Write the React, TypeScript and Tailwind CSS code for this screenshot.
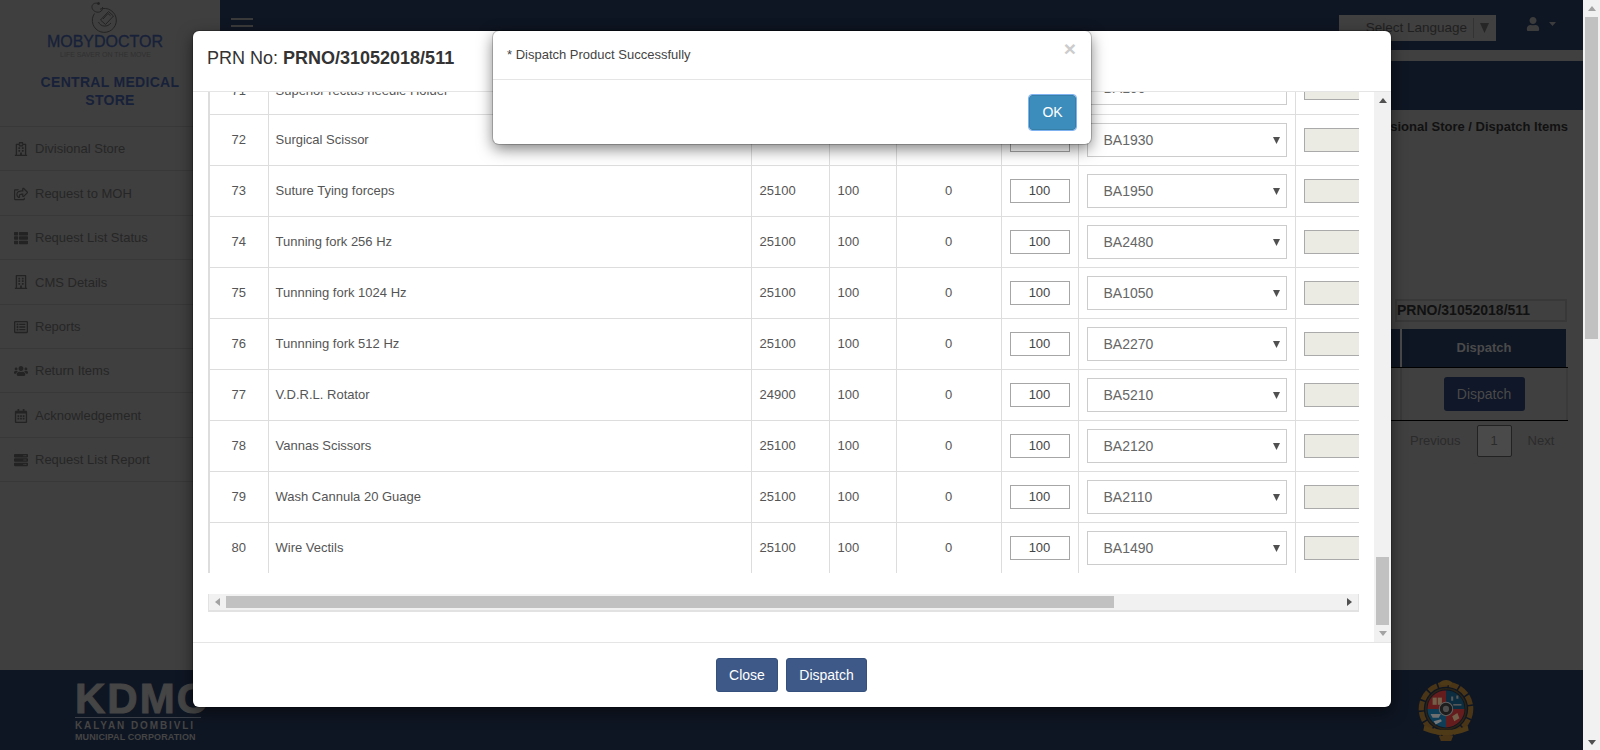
import { FaRegHospital, FaRegShareSquare, FaThList, FaRegBuilding, FaRegListAlt, FaUsers, FaRegCalendarAlt, FaServer, FaUser } from "react-icons/fa";

const nav = [
  { label: "Divisional Store", Icon: FaRegHospital },
  { label: "Request to MOH", Icon: FaRegShareSquare },
  { label: "Request List Status", Icon: FaThList },
  { label: "CMS Details", Icon: FaRegBuilding },
  { label: "Reports", Icon: FaRegListAlt },
  { label: "Return Items", Icon: FaUsers },
  { label: "Acknowledgement", Icon: FaRegCalendarAlt },
  { label: "Request List Report", Icon: FaServer },
];

const rows = [
  ["71", "Superior rectus needle Holder", "25100", "BA190"],
  ["72", "Surgical Scissor", "25100", "BA1930"],
  ["73", "Suture Tying forceps", "25100", "BA1950"],
  ["74", "Tunning fork 256 Hz", "25100", "BA2480"],
  ["75", "Tunnning fork 1024 Hz", "25100", "BA1050"],
  ["76", "Tunnning fork 512 Hz", "25100", "BA2270"],
  ["77", "V.D.R.L. Rotator", "24900", "BA5210"],
  ["78", "Vannas Scissors", "25100", "BA2120"],
  ["79", "Wash Cannula 20 Guage", "25100", "BA2110"],
  ["80", "Wire Vectils", "25100", "BA1490"],
];

function Tri({ dir, color = "#505050", w, h }: { dir: "up" | "down" | "left" | "right"; color?: string; w?: number; h?: number }) {
  const pts = { up: "0,6 10,6 5,0", down: "0,0 10,0 5,6", left: "6,0 6,10 0,5", right: "0,0 0,10 6,5" }[dir];
  const vertical = dir === "up" || dir === "down";
  return (
    <svg width={w ?? (vertical ? 8 : 5)} height={h ?? (vertical ? 5 : 8)} viewBox={vertical ? "0 0 10 6" : "0 0 6 10"} preserveAspectRatio="none">
      <polygon points={pts} fill={color} />
    </svg>
  );
}

function MobyLogo() {
  return (
    <svg width="32" height="32" viewBox="0 0 32 32" fill="none" stroke="#232323" strokeWidth="1">
      <path d="M11 8.2A12 12 0 1 1 5.5 12.5" />
      <path d="M9 2.5c-3.5 -1.2 -6.5 1 -6 4c.4 3 4 5.5 7.5 4.5c2.5 -.8 3.5 -3 3 -5" />
      <circle cx="9.5" cy="2.5" r="1" fill="#232323" />
      <path d="M11.5 19l8 -8.5l5 4.5l-8 8.5z" />
      <path d="M14 18l5 -5.5l2.5 2.2" />
      <path d="M9.5 21c2 5 9 5.5 12.5 1" />
    </svg>
  );
}

function Emblem() {
  return (
    <svg width="62" height="66" viewBox="0 0 60 64" fill="none">
      <circle cx="30" cy="30" r="24" stroke="#4a3517" strokeWidth="5" strokeDasharray="9 1.5" />
      <path d="M24 4q6 -4 12 0l-1 3h-10z" fill="#4f3a18" />
      <circle cx="30" cy="30" r="19.5" stroke="#2b2415" strokeWidth="1.5" />
      <path d="M30 30V12A18 18 0 0 0 12 30Z" fill="#641c1c" />
      <path d="M30 30V12A18 18 0 0 1 48 30Z" fill="#0c2c3f" />
      <path d="M30 30H12A18 18 0 0 0 30 48Z" fill="#0d3d57" />
      <path d="M30 30H48A18 18 0 0 1 30 48Z" fill="#641c1c" />
      <rect x="17" y="19" width="4" height="7" fill="#73604a" />
      <rect x="22" y="19" width="4" height="7" fill="#73604a" />
      <path d="M15 35h10l-2 3.5h-6z" fill="#6f6f6f" />
      <path d="M18 42l7 -2l1 2l-6 3z" fill="#777" />
      <path d="M36 37l5 -3l2 5l-5 3z" fill="#73604a" />
      <path d="M35 18h2v4h-2zM40 17h2v3h-2z" fill="#595959" />
      <path d="M37 26h8" stroke="#595959" strokeWidth="1.5" />
      <circle cx="30" cy="30" r="6.5" fill="#1d1d1d" stroke="#616161" strokeWidth="1" />
      <circle cx="30" cy="30" r="3" fill="#4d4d4d" />
      <path d="M9 46q21 9 42 0l1 5q-22 9 -44 0z" fill="#4f3a18" />
      <path d="M23 56h14l-2 5h-10z" fill="#4a3517" />
    </svg>
  );
}

export default function App() {
  return (
    <div className="relative flex h-[750px] w-[1600px] overflow-hidden bg-[#404040] font-['Liberation_Sans',Arial,sans-serif] text-[13px] text-[#262626]">
      {/* Page behind the dialogs */}
      <div className="flex w-[1583px] flex-col">
        <div className="flex h-[670px]">
          <aside className="w-[220px] shrink-0 bg-[#3f3f3f]">
            <div className="flex h-[127px] flex-col items-center border-b border-[#383838]">
              <div className="mt-[1px] ml-[-11px]"><MobyLogo /></div>
              <div className="ml-[-10px] text-[16px] leading-[18px] font-normal text-[#17213a] [-webkit-text-stroke:0.3px_#17213a]">MOBYDOCTOR</div>
              <div className="ml-[-9px] text-[7px] leading-[8px] text-[#303030]">LIFE SAVER ON THE MOVE</div>
              <div className="mt-[14px] w-[150px] text-center text-[14px] leading-[18px] font-bold tracking-[0.3px] text-[#17213a]">CENTRAL MEDICAL STORE</div>
            </div>
            {nav.map(({ label, Icon }) => (
              <div key={label} className="flex h-[44.4px] items-center gap-[7px] border-b border-[#383838] pt-[1px] pl-[14px] text-[13px]">
                <span className="flex w-[14px] justify-center text-[14px] text-[#232323]"><Icon /></span>
                <span>{label}</span>
              </div>
            ))}
          </aside>
          <main className="flex min-w-0 flex-1 flex-col">
            <header className="flex h-[50px] shrink-0 bg-[#0f1623] pl-[11px]">
              <div className="mt-[18px] flex flex-col gap-[5px]">
                <div className="h-[2px] w-[22px] bg-[#3a3a3a]" />
                <div className="h-[2px] w-[22px] bg-[#3a3a3a]" />
                <div className="h-[2px] w-[22px] bg-[#3a3a3a]" />
              </div>
              <div className="ml-auto flex items-start">
                <div className="mt-[15px] flex h-[26px] w-[157px] items-center justify-end bg-[#404040] pr-[7px] text-[13.5px] text-[#1f1f1f]">
                  <span>Select Language</span>
                  <span className="mx-[6px] h-[20px] w-px bg-[#333333]" />
                  <Tri dir="down" color="#262626" w={9} h={10} />
                </div>
                <div className="mt-[17px] mr-[27px] ml-[30px] flex items-center gap-[9px] text-[14px] text-[#3c3c3c]">
                  <FaUser />
                  <svg width="7" height="4" viewBox="0 0 7 4"><polygon points="0,0 7,0 3.5,4" fill="#3c3c3c" /></svg>
                </div>
              </div>
            </header>
            <div className="mt-[11px] h-[49px] shrink-0 bg-[#0f1623]" />
            <div className="flex flex-1 flex-col items-end pr-[15px]">
              <div className="mt-[9px] text-[13px] leading-[15px] font-bold text-[#111]">Divisional Store / Dispatch Items</div>
              <div className="mt-[165px] mr-[1px] flex h-[23px] w-[172px] items-center border-2 border-[#383838] text-[14px] font-bold whitespace-nowrap text-[#111]">PRNO/31052018/511</div>
              <div className="mt-[7px] mr-[2px] flex h-[38px] w-[177px]">
                <div className="w-[11px] bg-[#0f1623]" />
                <div className="w-[2px] bg-[#4a4a4a]" />
                <div className="flex flex-1 items-center justify-center bg-[#0f1623] text-[13px] font-bold text-[#4a4a4a]">Dispatch</div>
              </div>
              <div className="flex h-[54px] w-[179px] border-t border-b border-t-black border-b-black">
                <div className="w-[11px]" />
                <div className="flex flex-1 items-center justify-center border-x-2 border-[#3a3a3a]">
                  <button className="h-[34px] w-[81px] rounded-[3px] bg-[#0f1728] text-[14px] text-[#4a4a4a]">Dispatch</button>
                </div>
              </div>
              <div className="mt-[4px] flex h-[32px] w-[158px] items-center text-[13px] text-[#2b2b2b]">
                <span className="mr-[16px]">Previous</span>
                <span className="flex h-[32px] w-[35px] items-center justify-center rounded-[2px] border border-[#222] bg-[#4a4a4a]">1</span>
                <span className="ml-[16px]">Next</span>
              </div>
            </div>
          </main>
        </div>
        <footer className="flex h-[80px] items-start bg-[#0f1623]">
          <div className="mt-[11px] ml-[75px] w-[126px] text-[#454545]">
            <div className="h-[36px] text-[42px] leading-[36px] font-bold tracking-[2px] whitespace-nowrap [-webkit-text-stroke:1px_#454545]">KDMC</div>
            <div className="border-t border-[#3a3f48] pt-[2px] text-[10px] leading-[12px] font-bold tracking-[1.9px] whitespace-nowrap">KALYAN DOMBIVLI</div>
            <div className="text-[9px] leading-[10px] font-bold tracking-[0.1px] whitespace-nowrap">MUNICIPAL CORPORATION</div>
          </div>
          <div className="mt-[8px] ml-[1214px]"><Emblem /></div>
        </footer>
      </div>

      {/* Page scrollbar */}
      <div className="flex w-[17px] flex-col items-center bg-[#f1f1f1]">
        <div className="flex h-[17px] items-center"><Tri dir="up" color="#a3a3a3" /></div>
        <div className="h-[322px] w-[13px] bg-[#c1c1c1]" />
        <div className="mt-auto mb-[5px]"><Tri dir="down" color="#505050" /></div>
      </div>

      {/* Main dialog */}
      <div className="absolute top-[31px] left-[193px] flex h-[676px] w-[1198px] flex-col rounded-[6px] bg-white text-[#333] shadow-[0_0_0_1px_rgba(0,0,0,0.2),0_5px_15px_rgba(0,0,0,0.5)]">
        <div className="flex h-[61px] shrink-0 items-start border-b border-[#e5e5e5] px-[14px] pt-[13px] text-[18px] leading-[28px]">
          <span>PRN No:&nbsp;<b>PRNO/31052018/511</b></span>
        </div>
        <div className="flex h-[550px] shrink-0">
          <div className="relative ml-[15px] w-[1151px] overflow-hidden">
            <div className="mt-[-29px] h-[510px] overflow-hidden border-l-2 border-[#dddddd]">
              <table className="w-[1300px] table-fixed border-collapse text-[13px] text-[#555]">
                <colgroup>
                  <col className="w-[58px]" />
                  <col className="w-[483px]" />
                  <col className="w-[78px]" />
                  <col className="w-[67px]" />
                  <col className="w-[105px]" />
                  <col className="w-[77px]" />
                  <col className="w-[217px]" />
                  <col className="w-[215px]" />
                </colgroup>
                <tbody>
                  {rows.map(([no, name, price, batch], i) => (
                    <tr key={no} className="h-[51px] border-b border-[#dddddd]">
                      <td className={`border-r border-[#dddddd] text-center ${i === 0 ? "pt-[4px]" : ""}`}>{no}</td>
                      <td className={`border-r border-[#dddddd] pl-[7px] ${i === 0 ? "pt-[4px]" : ""}`}>{name}</td>
                      <td className="border-r border-[#dddddd] pl-[8px]">{price}</td>
                      <td className="border-r border-[#dddddd] pl-[8px]">100</td>
                      <td className="border-r border-[#dddddd] text-center">0</td>
                      <td className="border-r border-[#dddddd] pl-[8px]">
                        <div className="flex h-[24px] w-[60px] items-center justify-center border border-[#a6a6a6] text-[#444]">100</div>
                      </td>
                      <td className="border-r border-[#dddddd] pl-[8px]">
                        <div className="flex h-[34px] w-[200px] items-center justify-between border border-[#cccccc] pt-[1px] pr-[6px] pl-[16px] text-[14px] text-[#666]">
                          <span>{batch}</span>
                          <Tri dir="down" color="#505050" w={7} h={7} />
                        </div>
                      </td>
                      <td className="pl-[8px]">
                        <div className="h-[24px] w-[120px] border border-[#aaaaaa] bg-[#ebebe4]" />
                      </td>
                    </tr>
                  ))}
                </tbody>
              </table>
            </div>
            <div className="absolute top-[502px] right-0 left-0 flex h-[18px] items-stretch border-x border-b-2 border-[#e2e2e2] bg-[#f1f1f1]">
              <div className="flex w-[17px] items-center justify-center"><Tri dir="left" color="#a3a3a3" /></div>
              <div className="my-[2px] w-[888px] bg-[#c1c1c1]" />
              <div className="ml-auto flex w-[17px] items-center justify-center"><Tri dir="right" color="#505050" /></div>
            </div>
          </div>
          <div className="ml-[15px] flex w-[17px] flex-col items-center bg-[#f1f1f1]">
            <div className="flex h-[17px] items-center"><Tri dir="up" color="#505050" /></div>
            <div className="mt-[448px] h-[68px] w-[13px] bg-[#c1c1c1]" />
            <div className="mt-[6px]"><Tri dir="down" color="#a3a3a3" /></div>
          </div>
        </div>
        <div className="flex flex-1 items-start justify-center gap-[8px] border-t border-[#e5e5e5] pt-[15px] pr-[1px] text-[14px] text-white">
          <button className="h-[34px] w-[62px] rounded-[3px] border border-[#35507c] bg-[#3e5987]">Close</button>
          <button className="h-[34px] w-[81px] rounded-[3px] border border-[#35507c] bg-[#3e5987]">Dispatch</button>
        </div>
      </div>

      {/* Alert dialog */}
      <div className="absolute top-[31px] left-[493px] h-[113px] w-[598px] rounded-[6px] bg-white shadow-[0_0_0_1px_rgba(0,0,0,0.2),0_5px_15px_rgba(0,0,0,0.5)]">
        <div className="flex h-[49px] items-start justify-between border-b border-[#e5e5e5] pt-[16px] pr-[15px] pl-[14px] text-[13px] leading-[16px] text-[#444]">
          <span>* Dispatch Product Successfully</span>
          <span className="mt-[-9px] text-[21px] leading-[21px] font-bold text-[#cccccc]">×</span>
        </div>
        <div className="flex justify-end pt-[15px] pr-[15px]">
          <button className="h-[35px] w-[47px] rounded-[3px] border border-[#367fa9] bg-[#3c8dbc] text-[14px] text-white outline outline-1 outline-[#7fb2f0]">OK</button>
        </div>
      </div>
    </div>
  );
}
